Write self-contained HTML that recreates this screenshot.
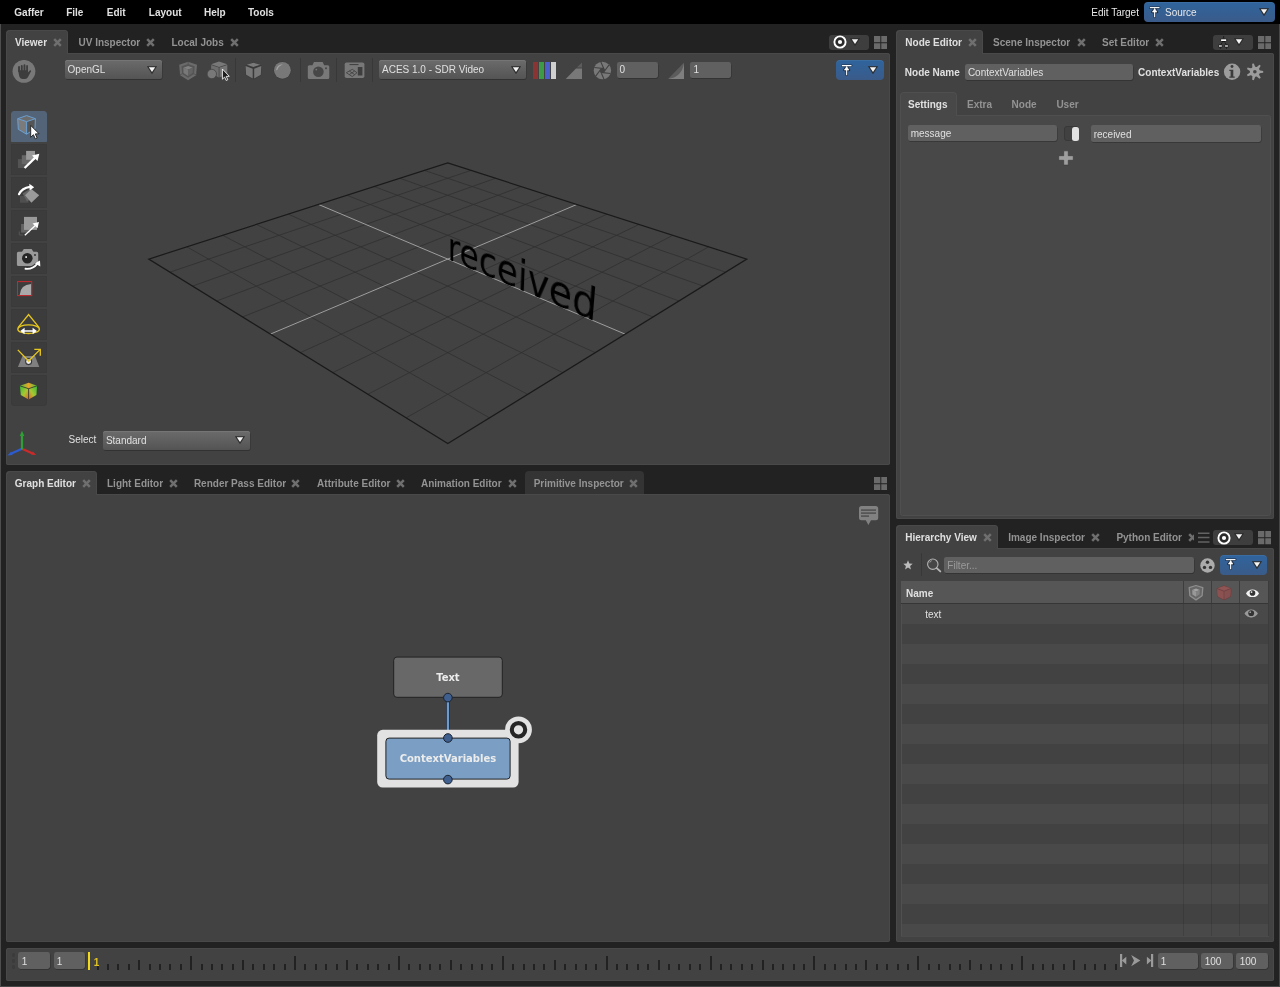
<!DOCTYPE html>
<html lang="en">
<head>
<meta charset="utf-8">
<title>Gaffer</title>
<style>
html,body{margin:0;padding:0}
body{width:1280px;height:987px;overflow:hidden;background:#222;position:relative;will-change:transform;
 font-family:"Liberation Sans",sans-serif;font-size:10px;color:#e0e0e0;line-height:12px}
div,span,i,b,svg{position:absolute;box-sizing:border-box}
b{font-weight:bold}
.t{white-space:nowrap;height:12px}
.bold{font-weight:bold}
.dim{color:#939393}
.panel{background:#424242;box-shadow:inset 0 0 0 1px #494949}
.tab{background:#424242;border-radius:4px 4px 0 0;height:24px;z-index:2;box-shadow:inset 1px 1px 0 #494949,inset -1px 0 0 #494949}
.t,.x{z-index:3}
.field{background:#606060;border-radius:2.200px;height:16.400px;box-shadow:.5px .7px 0 rgba(20,20,20,.4)}
.field .t{left:2.800px;top:2.700px}
.num .t{top:1.700px}
.tl{border-radius:2.400px}
.tl .t{top:2.900px;left:3.200px}
.combo{border-radius:2.500px;background:linear-gradient(#6b6b6b,#545454);box-shadow:inset 0 1px 0 #757575,0.500px 1px 0 rgba(20,20,20,.35);height:19.300px}
.combo .t{left:3px;top:3.400px}
.blue{border-radius:4px;background:linear-gradient(#2f649d,#3a5b89);box-shadow:inset 0 1px 0 rgba(255,255,255,.06);height:20px}
.vdiv{width:1px;background:#383838}
.x{width:9px;height:9px;margin:.4px 0 0 .4px}
.row{left:902px;width:366px}
#ticks i{width:2px;background:#222;display:block}
.tool{left:11.300px;width:35.500px;height:31.300px;background:#3c3c3c;border:1px solid #3a3a3a}
</style>
</head>
<body>

<!-- ======================= window frame ======================= -->
<div style="left:0;top:24px;width:1px;height:963px;background:#4e4e4e"></div>
<div style="left:1279px;top:24px;width:1px;height:963px;background:#484848"></div>
<div style="left:0;top:986px;width:1280px;height:1px;background:#484848"></div>

<!-- ======================= menu bar ======================= -->
<div id="menubar" style="left:0;top:0;width:1280px;height:24px;background:#000">
 <span class="t bold" style="left:14.3px;top:7px">Gaffer</span>
 <span class="t bold" style="left:66.2px;top:7px">File</span>
 <span class="t bold" style="left:106.8px;top:7px">Edit</span>
 <span class="t bold" style="left:148.8px;top:7px">Layout</span>
 <span class="t bold" style="left:204px;top:7px">Help</span>
 <span class="t bold" style="left:248px;top:7px">Tools</span>
 <span class="t" style="left:1091.3px;top:7px;color:#e8e8e8">Edit Target</span>
 <div class="blue" style="left:1144px;top:2px;width:131px;height:20px">
  <svg style="left:4.500px;top:3.500px" width="12" height="13"><use href="#i-target"/></svg>
  <span class="t" style="color:#e8e8e8;left:21px;top:5px">Source</span>
  <svg style="left:115px;top:6px" width="10" height="8"><use href="#i-arrow"/></svg>
 </div>
</div>

<!-- shared symbols -->
<svg width="0" height="0" style="left:0;top:0">
 <defs>
  <symbol id="i-x" viewBox="0 0 9 9"><path d="M1.200 1.200L7.800 7.800M7.800 1.200L1.200 7.800" stroke="#6f6f6f" stroke-width="2.500" stroke-linecap="butt"/></symbol>
  <symbol id="i-arrow" viewBox="0 0 10 8"><path d="M.4 .4H9.600L5 7.700Z" fill="#2c2c2c" stroke="#2c2c2c" stroke-width=".6" stroke-linejoin="round"/><path d="M1.800 1.300H8.200L5 6.100Z" fill="#f4f4f4"/></symbol>
  <symbol id="i-target" viewBox="0 0 12 13"><g fill="#1c2b42" stroke="#1c2b42" stroke-width="2.300" stroke-linejoin="round" stroke-linecap="round"><path d="M1 1.600H10.300"/><path d="M5.650 2.400V11"/><path d="M5.650 2.400L8.100 6.100H3.200Z"/></g><g fill="#fff" stroke="#fff" stroke-width="1.100"><path d="M.8 1.600H10.500"/><path d="M5.650 2.400V11.200"/><path d="M5.650 2.700L7.900 6H3.400Z" stroke-width=".6"/></g></symbol>
  <symbol id="i-grid" viewBox="0 0 14 14"><path d="M0 0h6.500v6.500H0zM7.500 0H14v6.500H7.500zM0 7.500h6.500V14H0zM7.500 7.500H14V14H7.500z" fill="#6a6a6a"/></symbol>
  <symbol id="i-focus" viewBox="0 0 14 14"><circle cx="7" cy="7" r="5.6" fill="#2a2a2a" stroke="#fff" stroke-width="1.9"/><circle cx="7" cy="7" r="2.1" fill="#fff"/></symbol>
  <symbol id="i-eye" viewBox="0 0 16 10"><path d="M0.6 5C3 1.2 6 0.6 8 0.6S13 1.2 15.4 5C13 8.8 10 9.4 8 9.4S3 8.8 0.6 5Z" fill="currentColor"/><circle cx="8" cy="4.6" r="3.2" fill="#333"/><circle cx="6.9" cy="3.5" r="1" fill="currentColor"/></symbol>
 </defs>
</svg>

<!-- ======================= VIEWER ======================= -->
<div id="viewer-tabs">
 <div class="tab" style="left:6px;top:30px;width:61.7px"></div>
 <span class="t bold" style="left:15px;top:37px">Viewer</span>
 <svg class="x" style="left:52.6px;top:38px"><use href="#i-x"/></svg>
 <span class="t bold dim" style="left:78.5px;top:37px">UV Inspector</span>
 <svg class="x" style="left:145.5px;top:38px"><use href="#i-x"/></svg>
 <span class="t bold dim" style="left:171.5px;top:37px">Local Jobs</span>
 <svg class="x" style="left:229.3px;top:38px"><use href="#i-x"/></svg>
 <div style="left:829px;top:35px;width:40px;height:15px;background:#3e3e3e;border-radius:3px"></div>
 <svg style="left:832.6px;top:35.4px" width="14" height="14"><use href="#i-focus"/></svg>
 <svg style="left:849.900px;top:38.200px" width="10" height="8"><use href="#i-arrow"/></svg>
 <svg style="left:873.7px;top:35.7px" width="13.6" height="13.6"><use href="#i-grid"/></svg>
</div>
<div id="viewer" class="panel" style="left:6px;top:53px;width:884px;height:412px;border-radius:0 2.500px 2.500px 2.500px;overflow:hidden">
 <!-- coordinates inside are offset by (-6,-53) via inner wrapper -->
 <div style="left:-6px;top:-53px;width:1280px;height:987px">
  <svg style="left:0;top:0" width="1280" height="987" viewBox="0 0 1280 987">
<path d="M471.01 170.40L169.91 272.16M424.40 170.40L725.64 272.16M495.49 178.27L192.49 286.09M399.93 178.27L703.05 286.09M521.23 186.55L216.64 300.99M374.19 186.55L678.90 301.00M548.34 195.27L242.53 316.96M347.10 195.27L653.01 316.97M607.09 214.17L300.34 352.62M288.37 214.17L595.22 352.64M639.01 224.43L332.74 372.61M256.47 224.44L562.82 372.63M672.81 235.30L367.87 394.29M222.69 235.31L527.70 394.30M708.68 246.84L406.08 417.86M186.85 246.84L489.50 417.87" stroke="#303030" stroke-width="0.8" fill="none"/>
<path d="M576.91 204.46L270.36 334.13M318.53 204.47L625.19 334.14" stroke="#a2a2a2" stroke-width="0.95" fill="none"/>
<path d="M447.70 162.90 L746.80 259.10 L447.80 443.60 L148.75 259.10 Z" stroke="#1a1a1a" stroke-width="1.2" fill="none" stroke-linejoin="miter"/>
  </svg>
  <div id="gltext" style="left:0;top:0;width:200px;height:70px;transform-origin:0 0;transform:matrix3d(0.40572913,0.11523294,0,-0.00080729483,0.23872607,1.1209494,0,0.00053246887,0,0,1,0,447.71852,210.93365,0,1);font-family:'DejaVu Sans',sans-serif;font-size:40px;line-height:70px;color:#000;white-space:nowrap"><span style="left:0;top:0;height:70px;line-height:70px">received</span></div>

  <!-- top toolbar -->
  <svg style="left:12px;top:60px" width="24" height="24" viewBox="0 0 24 24"><!-- hand -->
   <circle cx="11.950" cy="11.350" r="11.400" fill="#787878"/>
   <path d="M6.100 10.300H15.900V12.600L17.800 10.500Q18.800 9.700 19.200 11.100L15.700 17.400Q14.600 18.900 12.500 18.900H10.800Q8 18.900 7.200 16Z" fill="#3d3d3d"/>
   <rect x="6.100" y="6" width="1.850" height="6" rx=".9" fill="#3d3d3d"/>
   <rect x="8.850" y="5" width="1.850" height="7" rx=".9" fill="#3d3d3d"/>
   <rect x="11.550" y="4.200" width="1.850" height="8" rx=".9" fill="#3d3d3d"/>
   <rect x="14.200" y="5.100" width="1.750" height="7" rx=".85" fill="#3d3d3d"/>
  </svg>
  <div class="combo" style="left:65.300px;top:59.700px;width:96.900px"><span class="t" style="left:2.3px;top:4.3px">OpenGL</span>
   <svg style="left:81.700px;top:6px" width="10" height="8"><use href="#i-arrow"/></svg></div>
  <svg id="ic-a" style="left:178px;top:61px" width="20" height="20" viewBox="0 0 20 20"><path d="M10.100 .7L19 3.700L18.100 14.200L10.100 19.200L2.100 14.200L1.200 3.700Z" fill="#6b6b6b"/>
<path d="M10.100 3L16.700 5.200L16 13.100L10.100 16.800L4.200 13.100L3.500 5.200Z" fill="#555"/>
<path d="M10.100 .9V3.200M1.500 14L4.300 12.900M18.700 14L15.900 12.900" stroke="#505050" stroke-width=".8" fill="none"/>
<path d="M10.100 5L14.900 6.800L10.100 8.600L5.300 6.800Z" fill="#828282"/><path d="M5.300 6.800L10.100 8.600V15L5.500 12.100Z" fill="#787878"/><path d="M14.900 6.800L10.100 8.600V15L14.700 12.100Z" fill="#636363"/></svg>
  <svg id="ic-b" style="left:206px;top:61px" width="24" height="20" viewBox="0 0 24 20"><path d="M13 .5L21.300 3.300L13 5.900L5.100 3.300Z" fill="#787878"/>
<path d="M5.100 3.900L12.700 6.500V16.500L5.100 12Z" fill="#6e6e6e"/>
<path d="M21.300 3.900L13.500 6.500V16.500L21.300 13.200Z" fill="#747474"/>
<circle cx="5.800" cy="13" r="4.700" fill="#787878" stroke="#424242" stroke-width=".8"/>
<path d="M16.400 8V18.200L18.600 16.100L20.200 19.500L21.800 18.700L20.200 15.400L23.300 15.300Z" fill="#1e1e1e" stroke="#f4f4f4" stroke-width=".9" stroke-linejoin="round"/></svg>
  <div class="vdiv" style="left:235px;top:58px;height:24px"></div>
  <svg id="ic-c" style="left:244px;top:61px" width="20" height="20" viewBox="0 0 20 20"><path d="M9.450 1.200L17.900 4.700L17.200 14.200L9.450 18.600L1.700 14.200L1 4.700Z" fill="#393939"/>
<path d="M9.450 1.800L16.200 3.800L9.450 5.900L2.700 3.800Z" fill="#7a7a7a"/>
<path d="M1.600 5.100L8.700 7.700V17.500L2.100 13.750Z" fill="#787878"/>
<path d="M17.300 5.100L10.200 7.700V17.500L16.800 13.750Z" fill="#787878"/></svg>
  <svg id="ic-d" style="left:273px;top:61px" width="20" height="20" viewBox="0 0 20 20"><circle cx="9.400" cy="9.300" r="8.900" fill="#3a3a3a"/><circle cx="9.400" cy="9.300" r="8.400" fill="#787878"/><path d="M3.100 8.800Q4 3.900 9.900 3.100Q5.900 5 4 9.400Z" fill="#a4a4a4"/></svg>
  <div class="vdiv" style="left:300px;top:58px;height:24px"></div>
  <svg id="ic-e" style="left:307px;top:61px" width="23" height="20" viewBox="0 0 23 20"><path d="M2.300 4.300H5.400L7 1H15.600L17.200 4.300H20.800Q22.300 4.300 22.300 5.800V16.500Q22.300 18 20.800 18H2.300Q.8 18 .8 16.500V5.800Q.8 4.300 2.300 4.300Z" fill="#787878"/>
<circle cx="11.400" cy="10.700" r="5.300" fill="#474747"/><circle cx="9.300" cy="8.600" r=".9" fill="#777"/><circle cx="19" cy="7.200" r="1" fill="#474747"/></svg>
  <div class="vdiv" style="left:336px;top:58px;height:24px"></div>
  <svg id="ic-f" style="left:344px;top:61px" width="21" height="20" viewBox="0 0 21 20"><rect x=".7" y="1.400" width="19.700" height="15.600" rx="1.800" fill="#787878"/>
<path d="M5.500 3.600H14.500" stroke="#3e3e3e" stroke-width="1"/>
<rect x="13.800" y="6" width="4.600" height="8.500" fill="#3e3e3e"/>
<path d="M2.300 11.700L8.300 8.300L13 11.700L8.300 15.600ZM5.300 10L10.600 13.600M5.300 13.600L10.600 10" fill="none" stroke="#3e3e3e" stroke-width=".8"/></svg>
  <div class="vdiv" style="left:372px;top:58px;height:24px"></div>
  <div class="combo" style="left:379px;top:59.800px;width:147px"><span class="t" style="left:3.0px;top:4.2px">ACES 1.0 - SDR Video</span>
   <svg style="left:131.600px;top:5.800px" width="10" height="8"><use href="#i-arrow"/></svg></div>
  <div style="left:533px;top:62px;width:5.2px;height:17px;background:#8a3533"></div>
  <div style="left:538.8px;top:62px;width:5.3px;height:17px;background:#3d9b45"></div>
  <div style="left:544.8px;top:62px;width:5.3px;height:17px;background:#4a5fc9"></div>
  <div style="left:550.9px;top:62px;width:5.3px;height:17px;background:#cfcfcf"></div>
  <svg id="ic-g" style="left:565px;top:61px" width="18" height="19" viewBox="0 0 18 19"><path d="M17 1.400V6.500H11.700Z" fill="#5c5c5c"/><path d="M17 7.400V18.100H.7L11 7.400Z" fill="#787878"/></svg>
  <svg id="ic-h" style="left:593px;top:61px" width="19" height="19" viewBox="0 0 19 19"><circle cx="9.400" cy="9.500" r="8.700" fill="#787878"/><path d="M17.58 12.48L7.56 11.34M10.91 18.07L6.89 8.83M2.74 15.09L8.73 6.99M1.22 6.52L11.24 7.66M7.89 0.93L11.91 10.17M16.06 3.91L10.07 12.01" stroke="#424242" stroke-width="1.100" fill="none"/><circle cx="9.400" cy="9.500" r="2.300" fill="#424242"/></svg>
  <div class="field num" style="left:616.900px;top:62px;width:41.200px;height:16px"><span class="t" style="left:2.6px;top:2.0px">0</span></div>
  <svg id="ic-i" style="left:667px;top:61px" width="18" height="19" viewBox="0 0 18 19"><path d="M17 1.400V17.900H1.100Z" fill="#5c5c5c"/><path d="M17 2.500V17.900H1.100Q14.500 16.500 17 2.500Z" fill="#7e7e7e"/></svg>
  <div class="field num" style="left:690.200px;top:62px;width:41.200px;height:16px"><span class="t" style="left:3.3px;top:2.0px">1</span></div>
  <div class="blue" style="left:836px;top:60px;width:47.5px">
   <svg style="left:5px;top:3.500px" width="12" height="13"><use href="#i-target"/></svg>
   <svg style="left:31.5px;top:6px" width="10" height="8"><use href="#i-arrow"/></svg></div>

  <!-- left tool column -->
  <div class="tool" style="top:111.2px;background:#536478;border-color:#536478;border-radius:3px 3px 0 0"></div>
  <div class="tool" style="top:144.2px"></div>
  <div class="tool" style="top:177.2px"></div>
  <div class="tool" style="top:210.2px"></div>
  <div class="tool" style="top:243.2px"></div>
  <div class="tool" style="top:276.2px"></div>
  <div class="tool" style="top:309.2px"></div>
  <div class="tool" style="top:342.2px"></div>
  <div class="tool" style="top:375.2px;border-radius:0 0 3px 3px"></div>
  <svg style="left:0;top:100px" width="60" height="320" viewBox="0 100 60 320">
   <defs>
    <linearGradient id="gcl" x1="0" y1="0" x2="1" y2="1"><stop offset="0" stop-color="#35b83a"/><stop offset=".55" stop-color="#a8c832"/><stop offset="1" stop-color="#ec5a2a"/></linearGradient>
    <linearGradient id="gcr" x1="1" y1="0" x2="0" y2="1"><stop offset="0" stop-color="#35b83a"/><stop offset=".55" stop-color="#a8c832"/><stop offset="1" stop-color="#ec5a2a"/></linearGradient>
    <linearGradient id="gct" x1="0" y1="0" x2="1" y2="0"><stop offset="0" stop-color="#4fbf38"/><stop offset=".5" stop-color="#e6a52a"/><stop offset="1" stop-color="#4fbf38"/></linearGradient>
   </defs>
   <!-- selection tool -->
   <path d="M26.600 115.600L35.400 118.700L26.600 121.600L17.700 118.700Z" fill="#6c6c6c"/>
   <path d="M17.700 118.700L26.600 121.600V134.200L18.300 129.300Z" fill="#7b7b7b"/>
   <path d="M35.400 118.700L26.600 121.600V134.200L35 128.700Z" fill="#555"/>
   <path d="M26.600 115.600L35.400 118.700L35 128.700L26.600 134.200L18.300 129.300L17.700 118.700ZM17.700 118.700L26.600 121.600L35.400 118.700M26.600 121.600V134.200" fill="none" stroke="#6aa0d4" stroke-width="1" stroke-linejoin="round"/>
   <path d="M30.700 125.400V137.300L33.400 134.700L35.300 138.900L37.200 138L35.300 133.900L39.100 133.800Z" fill="#fff" stroke="#2a2a2a" stroke-width="1" stroke-linejoin="round"/>
   <!-- translate tool -->
   <rect x="17.900" y="159.100" width="8.900" height="8.900" fill="#545454"/>
   <rect x="21.800" y="155.200" width="8.900" height="8.900" fill="#686868"/>
   <rect x="26.100" y="150.900" width="8.900" height="8.900" fill="#9a9a9a"/>
   <path d="M24.600 168L35.500 157.400" stroke="#fff" stroke-width="2.300"/>
   <path d="M39.300 153.700L37.500 161L32 155.500Z" fill="#fff"/>
   <!-- rotate tool -->
   <rect x="20" y="196" width="8.500" height="6.700" fill="#4f4f4f"/>
   <path d="M22.500 193.500L29 189.500L33.500 197L27 201.500Z" fill="#646464"/>
   <path d="M31.400 188.900L39.200 195.300L31.400 202.700L25 195.300Z" fill="#9a9a9a"/>
   <path d="M19 194.200Q22 187.800 30 186.800" fill="none" stroke="#fff" stroke-width="2.200" stroke-linecap="round"/>
   <path d="M29.300 183.800L34.200 187.200L29.600 190.400Z" fill="#fff"/>
   <!-- scale tool -->
   <path d="M19.300 231.500V235H23" fill="none" stroke="#555" stroke-width="1"/>
   <rect x="21.100" y="224" width="9" height="8.600" fill="#646464"/>
   <rect x="24" y="216.900" width="13" height="13" fill="#9a9a9a"/>
   <path d="M24.800 235.300L35.600 225.200" stroke="#fff" stroke-width="1.300"/>
   <path d="M39 221.900L37.500 228.300L32.500 223.500Z" fill="#fff"/>
   <!-- camera tool -->
   <path d="M18.400 251.700H22L23.800 248.900H31.600L33.400 251.700H36.700Q38.200 251.700 38.200 253.200V264.400Q38.200 265.900 36.700 265.900H18.400Q16.900 265.900 16.900 264.400V253.200Q16.900 251.700 18.400 251.700Z" fill="#9a9a9a"/>
   <circle cx="27.300" cy="258.300" r="5.300" fill="#262626"/>
   <rect x="25.300" y="256.200" width="1.700" height="1.700" fill="#e8e8e8"/>
   <circle cx="35" cy="254.900" r="1" fill="#333"/>
   <path d="M25.500 268.800Q33 269.500 37.500 263.500" fill="none" stroke="#3c3c3c" stroke-width="4"/>
   <path d="M25.500 268.800Q33 269.500 37.500 263.500" fill="none" stroke="#fff" stroke-width="1.900" stroke-linecap="round"/>
   <path d="M40 260.600L40.300 266.500L34.800 263.200Z" fill="#fff"/>
   <!-- crop tool -->
   <path d="M31.200 284V295H19.700Q20.300 284.600 31.200 284Z" fill="#aaa"/>
   <rect x="17.500" y="281.600" width="14.200" height="14" fill="none" stroke="#c8282d" stroke-width="1"/>
   <!-- light tool -->
   <path d="M18 327.600L28.600 314.500L39.200 327.600" fill="none" stroke="#e8c81e" stroke-width="1.300" stroke-linejoin="miter"/>
   <ellipse cx="28.600" cy="329.200" rx="10.800" ry="4.300" fill="none" stroke="#e8c81e" stroke-width="1.300"/>
   <path d="M23.500 331H33.500" stroke="#fff" stroke-width="1.500"/>
   <path d="M20.300 331L24.600 327.800V334.200ZM36.900 331L32.600 327.800V334.200Z" fill="#fff"/>
   <!-- light position tool -->
   <path d="M22.500 356H35L39.300 367H17.900Z" fill="#808080"/>
   <circle cx="28.600" cy="361.600" r="3" fill="#ececec" stroke="#3a3a3a" stroke-width="1.100"/>
   <path d="M17.800 349.900L28.600 361L40 349.600" fill="none" stroke="#e8c81e" stroke-width="1.300"/>
   <path d="M34.300 349.400H40.300V355.700" fill="none" stroke="#e8c81e" stroke-width="1.300"/>
   <!-- visualiser tool -->
   <path d="M28.600 382.800L37.100 385.800L28.600 388.700L19.900 385.800Z" fill="url(#gct)"/>
   <path d="M19.900 385.800L28.600 388.700V399.400L20.800 395.100Z" fill="url(#gcl)"/>
   <path d="M37.100 385.800L28.600 388.700V399.400L36.400 395.100Z" fill="url(#gcr)"/>
   <path d="M19.900 385.800L28.600 388.700L37.100 385.800M28.600 388.700V399.400" fill="none" stroke="#333" stroke-width=".8"/>
  </svg>

  <!-- axis gizmo -->
  <svg style="left:4px;top:426px" width="40" height="36" viewBox="4 426 40 36">
   <path d="M22 448.700L10.800 453.800" stroke="#2d5bd0" stroke-width="2.300"/><path d="M7.300 455.500L11.100 451.700L12.700 455Z" fill="#2d5bd0"/>
   <path d="M22 448.700L32.600 453.500" stroke="#cc2a2a" stroke-width="2.300"/><path d="M36.200 455L32.800 451.400L31.300 454.700Z" fill="#cc2a2a"/>
   <path d="M22 449.500V435" stroke="#2e9e35" stroke-width="2.300"/><path d="M22 430.800L24.300 436H19.700Z" fill="#2e9e35"/>
  </svg>
  <span class="t" style="left:68.500px;top:434px">Select</span>
  <div class="combo" style="left:103px;top:430.700px;width:147.200px"><span class="t" style="left:2.9px;top:4.3px">Standard</span>
   <svg style="left:132.300px;top:5.800px" width="10" height="8"><use href="#i-arrow"/></svg></div>
 </div>
</div>

<!-- ======================= GRAPH EDITOR ======================= -->
<div id="graph-tabs">
 <div class="tab" style="left:6px;top:471px;width:90.7px"></div>
 <span class="t bold" style="left:14.8px;top:478px">Graph Editor</span>
 <svg class="x" style="left:81.4px;top:479px"><use href="#i-x"/></svg>
 <span class="t bold dim" style="left:107px;top:478px">Light Editor</span>
 <svg class="x" style="left:168.500px;top:479px"><use href="#i-x"/></svg>
 <span class="t bold dim" style="left:193.900px;top:478px">Render Pass Editor</span>
 <svg class="x" style="left:291px;top:479px"><use href="#i-x"/></svg>
 <span class="t bold dim" style="left:317.100px;top:478px">Attribute Editor</span>
 <svg class="x" style="left:395.400px;top:479px"><use href="#i-x"/></svg>
 <span class="t bold dim" style="left:421px;top:478px">Animation Editor</span>
 <svg class="x" style="left:507.500px;top:479px"><use href="#i-x"/></svg>
 <div class="tab" style="left:524.600px;top:471px;width:119px;height:23px;background:#343434;box-shadow:none;z-index:0"></div>
 <span class="t bold dim" style="left:533.700px;top:478px">Primitive Inspector</span>
 <svg class="x" style="left:628.400px;top:479px"><use href="#i-x"/></svg>
 <svg style="left:873.700px;top:476.700px" width="13.6" height="13.6"><use href="#i-grid"/></svg>
</div>
<div id="graph" class="panel" style="left:6px;top:494px;width:884px;height:447.700px;border-radius:0 2.500px 2.500px 2.500px">
 <svg style="left:-6px;top:-494px" width="1280" height="987" viewBox="0 0 1280 987">
  <!-- annotation icon -->
  <path d="M861.500 506h14.200a2.500 2.500 0 0 1 2.500 2.500v9.300a2.500 2.500 0 0 1-2.500 2.500h-4.700l-2.600 4.700-2.600-4.700h-4.300a2.500 2.500 0 0 1-2.500-2.500v-9.300a2.500 2.500 0 0 1 2.500-2.500z" fill="#818181"/>
  <path d="M861 509.200h15v1.700h-15zM861 512.300h15v1.700h-15zM861 515.300h8v1.700h-8z" fill="#565656"/>
  <!-- connection -->
  <path d="M447.900 698V738" stroke="#1f2c40" stroke-width="3.600"/>
  <path d="M447.900 698V738" stroke="#6f9bcb" stroke-width="2.200"/>
  <!-- Text node -->
  <rect x="393.700" y="657.100" width="108.600" height="40.200" rx="3.200" fill="#686868" stroke="#222" stroke-width="1"/>
  <text x="447.900" y="680.600" text-anchor="middle" font-family="'DejaVu Sans',sans-serif" font-weight="bold" font-size="10" fill="#ececec">Text</text>
  <!-- highlight -->
  <rect x="377.200" y="729.800" width="141.400" height="57.700" rx="5.500" fill="#e2e2e2"/>
  <circle cx="518.500" cy="729.800" r="13.400" fill="#e2e2e2"/>
  <circle cx="518.500" cy="729.800" r="6.700" fill="none" stroke="#262626" stroke-width="4.100"/>
  <!-- ContextVariables node -->
  <rect x="385.900" y="738.100" width="124.200" height="41" rx="3.200" fill="#7b9fc4" stroke="#222" stroke-width="1"/>
  <text x="447.900" y="762.300" text-anchor="middle" font-family="'DejaVu Sans',sans-serif" font-weight="bold" font-size="10" fill="#ececec">ContextVariables</text>
  <!-- nodules -->
  <circle cx="447.900" cy="697.600" r="4.300" fill="#3f5f8f" stroke="#1a2230" stroke-width="1"/>
  <circle cx="447.900" cy="738" r="4.300" fill="#3f5f8f" stroke="#1a2230" stroke-width="1"/>
  <circle cx="447.900" cy="779.600" r="4.300" fill="#3f5f8f" stroke="#1a2230" stroke-width="1"/>
 </svg>
</div>

<!-- ======================= NODE EDITOR ======================= -->
<div id="ne-tabs">
 <div class="tab" style="left:896px;top:30px;width:87px"></div>
 <span class="t bold" style="left:905.300px;top:37px">Node Editor</span>
 <svg class="x" style="left:967.500px;top:38px"><use href="#i-x"/></svg>
 <span class="t bold dim" style="left:993px;top:37px">Scene Inspector</span>
 <svg class="x" style="left:1076.700px;top:38px"><use href="#i-x"/></svg>
 <span class="t bold dim" style="left:1102px;top:37px">Set Editor</span>
 <svg class="x" style="left:1154.400px;top:38px"><use href="#i-x"/></svg>
 <div style="left:1213px;top:35px;width:40px;height:15px;background:#3e3e3e;border-radius:3px"></div>
 <svg style="left:1216px;top:34px" width="16" height="16" viewBox="1216 34 16 16">
  <path d="M1223.650 36.100V39M1220.400 47V48.700M1226.500 47V48.700M1222.300 42.500L1220.800 44.500M1225 42.500L1226.300 44.500" stroke="#1a1a1a" stroke-width="1" fill="none"/>
  <rect x="1220.600" y="38.800" width="6.100" height="2.700" rx=".9" fill="#fff" stroke="#161616" stroke-width="1"/>
  <rect x="1218.500" y="44.700" width="3.800" height="2.600" rx=".8" fill="#c4c4c4" stroke="#161616" stroke-width="1"/>
  <rect x="1224.600" y="44.700" width="3.800" height="2.600" rx=".8" fill="#c4c4c4" stroke="#161616" stroke-width="1"/>
 </svg>
 <svg style="left:1234.200px;top:37.800px" width="10" height="8"><use href="#i-arrow"/></svg>
 <svg style="left:1257.700px;top:35.700px" width="13.6" height="13.6"><use href="#i-grid"/></svg>
</div>
<div id="ne" class="panel" style="left:896px;top:53px;width:378px;height:465.600px;border-radius:0 2.500px 2.500px 2.500px">
 <div style="left:-896px;top:-53px;width:1280px;height:987px">
  <span class="t bold" style="left:904.800px;top:67px">Node Name</span>
  <div class="field" style="left:965.300px;top:63.500px;width:167.800px;height:16.5px"><span class="t" style="left:2.6px;top:3.5px">ContextVariables</span></div>
  <span class="t bold" style="left:1138.100px;top:67px">ContextVariables</span>
  <svg style="left:1223px;top:63px" width="18" height="18" viewBox="1223 63 18 18">
   <circle cx="1232.100" cy="71.800" r="8.200" fill="#9c9c9c"/>
   <circle cx="1232" cy="66.500" r="1.450" fill="#3c3c3c"/>
   <path d="M1229.300 69.800H1233.300V76.600H1234.700V77.800H1229.300V76.600H1230.600V71H1229.300Z" fill="#3c3c3c"/>
  </svg>
  <svg id="ic-gear" style="left:1246px;top:63px" width="18" height="18" viewBox="0 0 18 18"><path d="M6.41 4.90L6.12 0.86L7.83 0.46L9.33 4.23L10.38 4.46L13.35 1.71L14.73 2.80L12.73 6.32L13.20 7.29L17.20 7.90L17.21 9.66L13.20 10.29L12.74 11.26L14.76 14.77L13.39 15.87L10.40 13.13L9.35 13.37L7.87 17.14L6.15 16.76L6.43 12.71L5.59 12.04L1.72 13.23L0.95 11.65L4.28 9.35L4.28 8.27L0.94 5.99L1.69 4.40L5.57 5.57Z" fill="#9c9c9c"/><circle cx="8.85" cy="8.80" r="5" fill="#9c9c9c"/><circle cx="8.85" cy="8.80" r="1.800" fill="#444"/></svg>
  <!-- inner tabs -->
  <div style="left:899.500px;top:115px;width:371px;height:400.500px;background:#484848;border:1px solid #4f4f4f;border-radius:0 2.500px 2.500px 2.500px"></div>
  <div style="left:899.500px;top:92px;width:57px;height:24px;background:#484848;border:1px solid #4f4f4f;border-bottom:none;border-radius:4px 4px 0 0"></div>
  <span class="t bold" style="left:908px;top:99px">Settings</span>
  <span class="t bold dim" style="left:967px;top:99px">Extra</span>
  <span class="t bold dim" style="left:1011.600px;top:99px">Node</span>
  <span class="t bold dim" style="left:1056.400px;top:99px">User</span>
  <div class="field" style="left:908.400px;top:124.500px;width:148.800px;height:16.5px"><span class="t" style="left:2.3px;top:3.5px">message</span></div>
  <div style="left:1064.300px;top:126.100px;width:15.100px;height:15.400px;background:#414141;border:1px solid #383838;border-radius:3px"></div>
  <div style="left:1071.900px;top:126.700px;width:7.200px;height:14.300px;background:#e2e2e2;border-radius:2.500px"></div>
  <div class="field" style="left:1091.300px;top:125.300px;width:170px;height:16.5px"><span class="t" style="left:2.4px;top:3.7px">received</span></div>
  <svg style="left:1058px;top:150px" width="16" height="16" viewBox="1058 150 16 16"><path d="M1063.700 150.800H1068.300V155.700H1073.300V160.300H1068.300V165.100H1063.700V160.300H1058.700V155.700H1063.700Z" fill="#9e9e9e" stroke="#3c3c3c" stroke-width=".7"/></svg>
 </div>
</div>

<!-- ======================= HIERARCHY VIEW ======================= -->
<div id="hv-tabs">
 <div class="tab" style="left:896px;top:525px;width:101.700px"></div>
 <span class="t bold" style="left:905.300px;top:532px">Hierarchy View</span>
 <svg class="x" style="left:982.200px;top:533px"><use href="#i-x"/></svg>
 <span class="t bold dim" style="left:1008.200px;top:532px">Image Inspector</span>
 <svg class="x" style="left:1090.500px;top:533px"><use href="#i-x"/></svg>
 <span class="t bold dim" style="left:1116.400px;top:532px">Python Editor</span>
 <div style="left:1187.500px;top:533px;width:6.500px;height:9px;overflow:hidden"><svg class="x" style="left:0;top:0"><use href="#i-x"/></svg></div>
 <svg style="left:1197.500px;top:532px" width="12" height="11" viewBox="0 0 12 11"><path d="M0 1.300h11.500M0 5.600h11.500M0 9.900h11.500" stroke="#636363" stroke-width="1.500"/></svg>
 <div style="left:1213px;top:530px;width:40px;height:15px;background:#3e3e3e;border-radius:3px"></div>
 <svg style="left:1216.500px;top:530.500px" width="14" height="14"><use href="#i-focus"/></svg>
 <svg style="left:1234.200px;top:533.100px" width="10" height="8"><use href="#i-arrow"/></svg>
 <svg style="left:1257.700px;top:531px" width="13.6" height="13.6"><use href="#i-grid"/></svg>
</div>
<div id="hv" class="panel" style="left:896px;top:548px;width:378px;height:393.700px;border-radius:0 2.500px 2.500px 2.500px">
 <div style="left:-896px;top:-548px;width:1280px;height:987px">
  <svg style="left:903px;top:560px" width="10" height="10" viewBox="0 0 10 10"><path d="M5 .3l1.300 3.200 3.400.3-2.600 2.200.8 3.400L5 7.600 2.100 9.400l.8-3.400L.3 3.800l3.400-.3z" fill="#bdbdbd"/></svg>
  <div class="vdiv" style="left:921px;top:553px;height:23px"></div>
  <svg style="left:926px;top:557px" width="16" height="16" viewBox="926 557 16 16"><circle cx="932.800" cy="564.200" r="5.200" fill="#464646" stroke="#b4b4b4" stroke-width="1.100"/><path d="M936.700 568.100L940.300 571.400" stroke="#b4b4b4" stroke-width="1.900" stroke-linecap="round"/><path d="M929.800 562.600a3.200 3.200 0 0 1 2-2" stroke="#b4b4b4" stroke-width=".8" fill="none"/></svg>
  <div class="field" style="left:944.300px;top:556.500px;width:249.800px;height:16.400px"><span class="t" style="color:#9a9a9a;left:3px;top:3.500px">Filter...</span></div>
  <svg style="left:1199.500px;top:557.700px" width="15" height="15" viewBox="0 0 15 15"><circle cx="7.500" cy="7.500" r="7.200" fill="#ababab"/><circle cx="7.500" cy="4.300" r="1.700" fill="#333"/><circle cx="4.500" cy="9.400" r="1.700" fill="#333"/><circle cx="10.500" cy="9.400" r="1.700" fill="#333"/></svg>
  <div class="blue" style="left:1220.300px;top:555.300px;width:47.200px;height:19.500px">
   <svg style="left:5px;top:3px" width="12" height="13"><use href="#i-target"/></svg>
   <svg style="left:31.500px;top:5.500px" width="10" height="8"><use href="#i-arrow"/></svg></div>
  <!-- table -->
  <div style="left:901px;top:581.300px;width:1px;height:355.400px;background:#505050"></div>
  <div style="left:901px;top:936px;width:367.500px;height:1px;background:#4b4b4b"></div>
  <div style="left:1268px;top:581.300px;width:1px;height:354.700px;background:#3c3c3c"></div>
  <div style="left:901.300px;top:581.300px;width:366.700px;height:21.700px;background:#565656"></div>
  <div style="left:901.300px;top:603px;width:366.700px;height:1px;background:#363636"></div>
<div class="row" style="top:604px;height:20px;background:#494949"></div><div class="row" style="top:624px;height:20px;background:#424242"></div><div class="row" style="top:644px;height:20px;background:#494949"></div><div class="row" style="top:664px;height:20px;background:#424242"></div><div class="row" style="top:684px;height:20px;background:#494949"></div><div class="row" style="top:704px;height:20px;background:#424242"></div><div class="row" style="top:724px;height:20px;background:#494949"></div><div class="row" style="top:744px;height:20px;background:#424242"></div><div class="row" style="top:764px;height:20px;background:#494949"></div><div class="row" style="top:784px;height:20px;background:#424242"></div><div class="row" style="top:804px;height:20px;background:#494949"></div><div class="row" style="top:824px;height:20px;background:#424242"></div><div class="row" style="top:844px;height:20px;background:#494949"></div><div class="row" style="top:864px;height:20px;background:#424242"></div><div class="row" style="top:884px;height:20px;background:#494949"></div><div class="row" style="top:904px;height:20px;background:#424242"></div><div class="row" style="top:924px;height:12px;background:#494949"></div>
  <span class="t bold" style="left:906px;top:588px">Name</span>
  <span class="t" style="left:925.200px;top:609px">text</span>
  <div style="left:1183px;top:581.300px;width:1px;height:21.700px;background:#3d3d3d"></div><div style="left:1183px;top:604px;width:1px;height:332px;background:rgba(30,30,30,.2)"></div>
  <div style="left:1211px;top:581.300px;width:1px;height:21.700px;background:#3d3d3d"></div><div style="left:1211px;top:604px;width:1px;height:332px;background:rgba(30,30,30,.2)"></div>
  <div style="left:1239px;top:581.300px;width:1px;height:21.700px;background:#3d3d3d"></div><div style="left:1239px;top:604px;width:1px;height:332px;background:rgba(30,30,30,.2)"></div>
  <svg id="ic-shield" style="left:1187px;top:583px" width="18" height="19" viewBox="1187 583 18 19"><path d="M1196 585.500L1202.800 587.700L1202.100 595.700L1196 599.900L1189.900 595.700L1189.200 587.700Z" fill="#676767" stroke="#8e8e8e" stroke-width="1.300" stroke-linejoin="round"/>
<path d="M1196 588.600L1199.800 590L1196 591.400L1192.200 590Z" fill="#a4a4a4"/><path d="M1192.200 590L1196 591.400V596.800L1192.400 594.400Z" fill="#989898"/><path d="M1199.800 590L1196 591.400V596.800L1199.600 594.400Z" fill="#828282"/></svg>
  <svg id="ic-redcube" style="left:1215px;top:584px" width="18" height="18" viewBox="1215 584 18 18"><path d="M1224 585.300L1231.600 588.500L1231 596.600L1224 600.400L1217 596.600L1216.500 588.500Z" fill="#6d4040"/>
<path d="M1224 585.900L1230.500 588.300L1224 590.700L1217.500 588.300Z" fill="#8f5454"/><path d="M1217.100 589.100L1223.600 591.500V599.600L1217.600 596.300Z" fill="#8c5252"/><path d="M1230.900 589.100L1224.400 591.500V599.600L1230.400 596.300Z" fill="#875050"/></svg>
  <svg style="left:1244.500px;top:588.700px;color:#f2f2f2" width="15" height="8.800"><use href="#i-eye"/></svg>
  <svg style="left:1243.600px;top:609.400px;color:#9a9a9a" width="14.400" height="9"><use href="#i-eye"/></svg>
 </div>
</div>

<!-- ======================= TIMELINE ======================= -->
<div id="timeline" class="panel" style="left:6px;top:947.700px;width:1268px;height:33.200px;border-radius:2.500px"></div>
<div style="left:11.700px;top:953px;width:3.600px;height:3.600px;border-radius:2px;background:#3b3b3b"></div>
<div style="left:11.700px;top:959px;width:3.600px;height:3.600px;border-radius:2px;background:#3b3b3b"></div>
<div style="left:11.700px;top:965px;width:3.600px;height:3.600px;border-radius:2px;background:#3b3b3b"></div>
<div class="field tl" style="left:18.400px;top:952.400px;width:31.700px;height:16.600px"><span class="t" style="left:3.3px;top:3.6px">1</span></div>
<div class="field tl" style="left:53.500px;top:952.400px;width:31.500px;height:16.600px"><span class="t" style="left:3.3px;top:3.6px">1</span></div>
<div id="ticks"><i style="left:97px;top:964.4px;height:5.4px"></i><i style="left:107px;top:964.4px;height:5.4px"></i><i style="left:117px;top:964.4px;height:5.4px"></i><i style="left:128px;top:964.4px;height:5.4px"></i><i style="left:138px;top:959.7px;height:10.1px"></i><i style="left:149px;top:964.4px;height:5.4px"></i><i style="left:159px;top:964.4px;height:5.4px"></i><i style="left:169px;top:964.4px;height:5.4px"></i><i style="left:180px;top:964.4px;height:5.4px"></i><i style="left:190px;top:955.6px;height:14.2px"></i><i style="left:201px;top:964.4px;height:5.4px"></i><i style="left:211px;top:964.4px;height:5.4px"></i><i style="left:221px;top:964.4px;height:5.4px"></i><i style="left:232px;top:964.4px;height:5.4px"></i><i style="left:242px;top:959.7px;height:10.1px"></i><i style="left:252px;top:964.4px;height:5.4px"></i><i style="left:263px;top:964.4px;height:5.4px"></i><i style="left:273px;top:964.4px;height:5.4px"></i><i style="left:284px;top:964.4px;height:5.4px"></i><i style="left:294px;top:955.6px;height:14.2px"></i><i style="left:304px;top:964.4px;height:5.4px"></i><i style="left:315px;top:964.4px;height:5.4px"></i><i style="left:325px;top:964.4px;height:5.4px"></i><i style="left:336px;top:964.4px;height:5.4px"></i><i style="left:346px;top:959.7px;height:10.1px"></i><i style="left:356px;top:964.4px;height:5.4px"></i><i style="left:367px;top:964.4px;height:5.4px"></i><i style="left:377px;top:964.4px;height:5.4px"></i><i style="left:388px;top:964.4px;height:5.4px"></i><i style="left:398px;top:955.6px;height:14.2px"></i><i style="left:408px;top:964.4px;height:5.4px"></i><i style="left:419px;top:964.4px;height:5.4px"></i><i style="left:429px;top:964.4px;height:5.4px"></i><i style="left:439px;top:964.4px;height:5.4px"></i><i style="left:450px;top:959.7px;height:10.1px"></i><i style="left:460px;top:964.4px;height:5.4px"></i><i style="left:471px;top:964.4px;height:5.4px"></i><i style="left:481px;top:964.4px;height:5.4px"></i><i style="left:491px;top:964.4px;height:5.4px"></i><i style="left:502px;top:955.6px;height:14.2px"></i><i style="left:512px;top:964.4px;height:5.4px"></i><i style="left:523px;top:964.4px;height:5.4px"></i><i style="left:533px;top:964.4px;height:5.4px"></i><i style="left:543px;top:964.4px;height:5.4px"></i><i style="left:554px;top:959.7px;height:10.1px"></i><i style="left:564px;top:964.4px;height:5.4px"></i><i style="left:575px;top:964.4px;height:5.4px"></i><i style="left:585px;top:964.4px;height:5.4px"></i><i style="left:595px;top:964.4px;height:5.4px"></i><i style="left:606px;top:955.6px;height:14.2px"></i><i style="left:616px;top:964.4px;height:5.4px"></i><i style="left:626px;top:964.4px;height:5.4px"></i><i style="left:637px;top:964.4px;height:5.4px"></i><i style="left:647px;top:964.4px;height:5.4px"></i><i style="left:658px;top:959.7px;height:10.1px"></i><i style="left:668px;top:964.4px;height:5.4px"></i><i style="left:678px;top:964.4px;height:5.4px"></i><i style="left:689px;top:964.4px;height:5.4px"></i><i style="left:699px;top:964.4px;height:5.4px"></i><i style="left:710px;top:955.6px;height:14.2px"></i><i style="left:720px;top:964.4px;height:5.4px"></i><i style="left:730px;top:964.4px;height:5.4px"></i><i style="left:741px;top:964.4px;height:5.4px"></i><i style="left:751px;top:964.4px;height:5.4px"></i><i style="left:762px;top:959.7px;height:10.1px"></i><i style="left:772px;top:964.4px;height:5.4px"></i><i style="left:782px;top:964.4px;height:5.4px"></i><i style="left:793px;top:964.4px;height:5.4px"></i><i style="left:803px;top:964.4px;height:5.4px"></i><i style="left:813px;top:955.6px;height:14.2px"></i><i style="left:824px;top:964.4px;height:5.4px"></i><i style="left:834px;top:964.4px;height:5.4px"></i><i style="left:845px;top:964.4px;height:5.4px"></i><i style="left:855px;top:964.4px;height:5.4px"></i><i style="left:865px;top:959.7px;height:10.1px"></i><i style="left:876px;top:964.4px;height:5.4px"></i><i style="left:886px;top:964.4px;height:5.4px"></i><i style="left:897px;top:964.4px;height:5.4px"></i><i style="left:907px;top:964.4px;height:5.4px"></i><i style="left:917px;top:955.6px;height:14.2px"></i><i style="left:928px;top:964.4px;height:5.4px"></i><i style="left:938px;top:964.4px;height:5.4px"></i><i style="left:949px;top:964.4px;height:5.4px"></i><i style="left:959px;top:964.4px;height:5.4px"></i><i style="left:969px;top:959.7px;height:10.1px"></i><i style="left:980px;top:964.4px;height:5.4px"></i><i style="left:990px;top:964.4px;height:5.4px"></i><i style="left:1000px;top:964.4px;height:5.4px"></i><i style="left:1011px;top:964.4px;height:5.4px"></i><i style="left:1021px;top:955.6px;height:14.2px"></i><i style="left:1032px;top:964.4px;height:5.4px"></i><i style="left:1042px;top:964.4px;height:5.4px"></i><i style="left:1052px;top:964.4px;height:5.4px"></i><i style="left:1063px;top:964.4px;height:5.4px"></i><i style="left:1073px;top:959.7px;height:10.1px"></i><i style="left:1084px;top:964.4px;height:5.4px"></i><i style="left:1094px;top:964.4px;height:5.4px"></i><i style="left:1104px;top:964.4px;height:5.4px"></i><i style="left:1115px;top:964.4px;height:5.4px"></i></div>
<div style="left:87.800px;top:951.700px;width:2.400px;height:18.300px;background:#f2d91c"></div>
<span class="t bold" style="left:93.800px;top:957px;color:#e0c424">1</span>
<svg style="left:1119px;top:953px" width="36" height="15" viewBox="1119 953 36 15">
 <rect x="1120" y="954" width="2.200" height="13" fill="#9a9a9a"/><path d="M1121.800 960.600L1126.300 956.800V964.400Z" fill="#9a9a9a"/>
 <path d="M1131.200 955L1140.400 960.600L1131.200 966.200L1134 960.600Z" fill="#9a9a9a"/>
 <rect x="1151" y="954" width="2.200" height="13" fill="#9a9a9a"/><path d="M1151.400 960.600L1146.900 956.800V964.400Z" fill="#9a9a9a"/>
</svg>
<div class="field tl" style="left:1157.500px;top:952.500px;width:40.400px;height:16.500px"><span class="t" style="left:3.3px;top:3.5px">1</span></div>
<div class="field tl" style="left:1201.400px;top:952.500px;width:31.400px;height:16.500px"><span class="t" style="left:3.3px;top:3.5px">100</span></div>
<div class="field tl" style="left:1236.400px;top:952.500px;width:31.600px;height:16.500px"><span class="t" style="left:3.3px;top:3.5px">100</span></div>

</body>
</html>
